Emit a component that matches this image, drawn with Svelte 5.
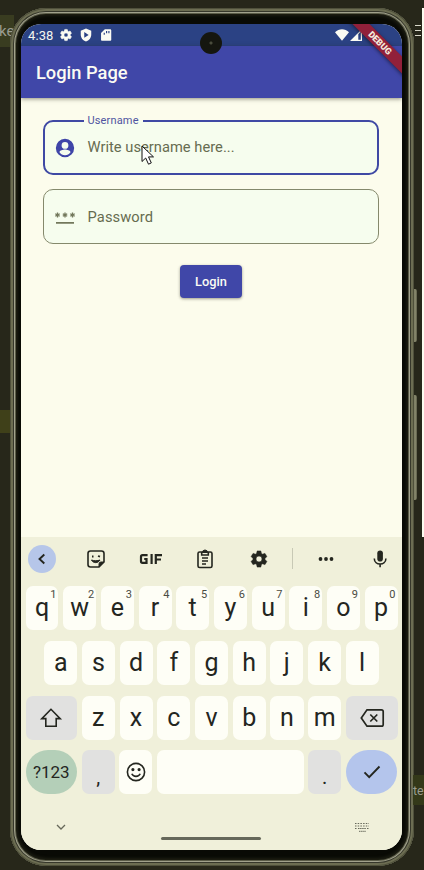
<script>
  const row1 = 'qwertyuiop'.split('');
  const row2 = 'asdfghjkl'.split('');
  const row3 = 'zxcvbnm'.split('');
  const gear =
    'M19.14 12.94c.04-.3.06-.61.06-.94s-.02-.64-.07-.94l2.03-1.58c.18-.14.23-.41.12-.61l-1.92-3.32c-.12-.22-.37-.29-.59-.22l-2.39.96c-.5-.38-1.03-.7-1.62-.94l-.36-2.54c-.04-.24-.24-.41-.48-.41h-3.84c-.24 0-.43.17-.47.41l-.36 2.54c-.59.24-1.13.57-1.62.94l-2.39-.96c-.22-.08-.47 0-.59.22L2.74 8.87c-.12.21-.08.47.12.61l2.03 1.58c-.05.3-.09.63-.09.94s.02.64.07.94l-2.03 1.58c-.18.14-.23.41-.12.61l1.92 3.32c.12.22.37.29.59.22l2.39-.96c.5.38 1.03.7 1.62.94l.36 2.54c.05.24.24.41.48.41h3.84c.24 0 .44-.17.47-.41l.36-2.54c.59-.24 1.13-.56 1.62-.94l2.39.96c.22.08.47 0 .59-.22l1.92-3.32c.12-.22.07-.47-.12-.61l-2.01-1.58zM12 15.6A3.6 3.6 0 1 1 12 8.4a3.6 3.6 0 0 1 0 7.2z';
</script>

<div class="desktop">
  <div class="band left"><span>ke</span></div>
  <div class="band right"><span>te</span></div>
  <div class="strip"></div>
  <div class="patch"></div>
  <div class="burger"><i></i><i></i><i></i></div>
  <div class="side power"></div>
  <div class="side volume"></div>

  <div class="phone">
    <div class="screen">
      <header class="status">
        <span class="clock">4:38</span>
        <svg class="s1" width="14" height="14" viewBox="0 0 24 24"><path fill-rule="evenodd" d={gear} stroke="#fbfbf3" stroke-width="1" /></svg>
        <svg class="s2" width="14" height="14" viewBox="0 0 24 24"><path fill-rule="evenodd" d="M12 1 3 4.5V11c0 5.6 3.8 10.7 9 12 5.200-1.300 9-6.400 9-12V4.500zM9 7l7.500 4.800L9 16.600z" /></svg>
        <svg class="s3" width="14" height="14" viewBox="0 0 24 24"><path fill-rule="evenodd" d="M19 2H10L3.500 8.500V20c0 1.100.9 2 2 2H19c1.100 0 2-.9 2-2V4c0-1.100-.9-2-2-2zM8 8h2v3.500H8zM12 5h2v4h-2zM16 5h2v4h-2z" /></svg>
        <svg class="wifi" width="14" height="12" viewBox="0 0 14 12"><path d="M0 3.200C4-.8 10-.8 14 3.200L7 11.800z" /></svg>
        <svg class="cell" width="12" height="12" viewBox="0 0 12 12"><path fill-rule="evenodd" d="M0 12 12 0V12zM8.300 5.300V10.800H10.800V2.800z" /></svg>
      </header>
      <div class="appbar">Login Page</div>

      <main>
        <div class="field active">
          <span class="label">Username</span>
          <svg width="22" height="22" viewBox="0 0 24 24" fill="#3f45a8"><path fill-rule="evenodd" d="M12 2a10 10 0 1 0 0 20 10 10 0 0 0 0-20zm0 3.500a3.700 3.700 0 1 1 0 7.400 3.700 3.700 0 0 1 0-7.400zM12 19.800c-2.500 0-4.700-1.300-6-3.300.03-2 4-3 6-3s5.970 1 6 3c-1.300 2-3.500 3.300-6 3.300z" /></svg>
          <span class="hint">Write username here...</span>
        </div>
        <div class="field">
          <svg width="22" height="22" viewBox="0 0 22 22" fill="none" stroke="#73785c">
            <path stroke-width="1.700" d="M2 16.800h18" />
            <path stroke-width="1.300" d="M3.500 6.500v5M1.300 7.700l4.400 2.600M5.700 7.700 1.300 10.300M11 6.500v5M8.800 7.700l4.400 2.600M13.200 7.700l-4.400 2.600M18.500 6.500v5M16.300 7.700l4.400 2.600M20.700 7.700l-4.400 2.600" />
          </svg>
          <span>Password</span>
        </div>
        <button class="login">Login</button>
      </main>

      <section class="keyboard">
        <div class="tools">
          <div class="tool back"><svg width="20" height="20" viewBox="0 0 20 20" class="line"><path stroke-width="1.900" d="m12.300 5.500-4.800 4.500 4.800 4.500" /></svg></div>
          <div class="tool">
            <svg width="20" height="20" viewBox="0 0 20 20" class="line">
              <path d="M13 18H4.500A2.500 2.500 0 0 1 2 15.500v-11A2.500 2.500 0 0 1 4.500 2h11A2.500 2.500 0 0 1 18 4.500V13z" />
              <path d="M13 18v-3a2 2 0 0 1 2-2h3z" fill="#24261f" stroke-width="1" />
              <path d="M5.500 11c1.700 3.500 6.500 3.500 8.500 0-2.500 1-6 1-8.500 0z" fill="#24261f" stroke-width="1" />
              <path d="M6 7.500h1.500M12 7l2 .7" stroke-width="1.800" />
            </svg>
          </div>
          <div class="tool">
            <svg width="24" height="14" viewBox="0 0 24 14" class="line gif"><path d="M8.600 3.200H3.500a1.500 1.500 0 0 0-1.500 1.500v4.600a1.500 1.500 0 0 0 1.500 1.500h4V7H5.200M12.600 2v10M16.800 12V3.200H23M16.800 7.500H22" /></svg>
          </div>
          <div class="tool">
            <svg width="20" height="20" viewBox="0 0 20 20" class="line">
              <rect x="3" y="3" width="14" height="15.500" rx="1.600" />
              <path d="M6.700 3v3h6.600V3M7 9h6M7 12h6M7 15h4" />
              <path d="M7.500 3.500a2.500 2.500 0 0 1 5 0z" fill="#24261f" stroke-width="1" />
            </svg>
          </div>
          <div class="tool"><svg width="20" height="20" viewBox="0 0 24 24" fill="#24261f" stroke="#24261f" stroke-width=".7"><path fill-rule="evenodd" d={gear} /></svg></div>
          <i class="divider"></i>
          <div class="tool"><svg width="18" height="6" viewBox="0 0 18 6" fill="#24261f"><circle cx="3.500" cy="3" r="1.900" /><circle cx="9" cy="3" r="1.900" /><circle cx="14.500" cy="3" r="1.900" /></svg></div>
          <div class="tool"><svg width="20" height="20" viewBox="0 0 20 20"><rect x="7.300" y="1.500" width="5.600" height="11" rx="2.800" fill="#24261f" /><path d="M4.300 9.500c0 7.300 11.600 7.300 11.600 0M10.100 15v3.200" fill="none" stroke="#24261f" stroke-width="1.600" /></svg></div>
        </div>

        <div class="row">
          {#each row1 as k, i}
            <div class="key">{k}<sup>{(i + 1) % 10}</sup></div>
          {/each}
        </div>
        <div class="row inset">
          {#each row2 as k}<div class="key">{k}</div>{/each}
        </div>
        <div class="row">
          <div class="key wide mod"><svg width="24" height="24" viewBox="0 0 24 24" class="line"><path stroke-width="1.600" d="M12 3.300 2.800 12.600h4v7.700h10.400v-7.700h4z" /></svg></div>
          {#each row3 as k}<div class="key">{k}</div>{/each}
          <div class="key wide mod"><svg width="26" height="22" viewBox="0 0 26 22" class="line"><path stroke-width="1.700" d="M8 2.800h14.500a1.700 1.700 0 0 1 1.700 1.700v13a1.700 1.700 0 0 1-1.700 1.700H8L2.300 11zM11.300 7.500l7 7M18.300 7.500l-7 7" /></svg></div>
        </div>
        <div class="row">
          <div class="key wide pill sym">?123</div>
          <div class="key mod low">,</div>
          <div class="key"><svg width="22" height="22" viewBox="0 0 22 22" class="line"><circle cx="11" cy="11" r="8.600" /><path d="M6.800 12.800c1.500 3.500 6.900 3.500 8.400 0" /><circle cx="7.900" cy="8.600" r=".8" fill="#24261f" /><circle cx="14.100" cy="8.600" r=".8" fill="#24261f" /></svg></div>
          <div class="key space"></div>
          <div class="key mod low">.</div>
          <div class="key wide pill ok"><svg width="22" height="22" viewBox="0 0 22 22" class="line"><path stroke-width="1.900" d="m3.500 11.300 4.700 4.900L18.500 5.500" /></svg></div>
        </div>

        <div class="nav">
          <svg width="12" height="10" viewBox="0 0 12 10" class="line thin"><path d="m2 3 4 4 4-4" /></svg>
          <i class="home"></i>
          <svg width="16" height="10" viewBox="0 0 16 10" stroke="#66685a" fill="none"><path stroke-width="1" stroke-dasharray="1.500 1.200" d="M1 1.500h14M1 4h14" /><path d="M1 6.500h2M4 6.500h8M13 6.500h2M5 9.300h7" stroke-dasharray="1.500 .6" /></svg>
        </div>
      </section>

      <div class="debug">DEBUG</div>
    </div>
    <div class="camera"></div>
  </div>

  <svg class="cursor" width="14" height="22" viewBox="0 0 14 22"><path d="M1 1v15.500l3.700-3.500 2.800 6.200 2.800-1.300-2.800-6h5z" fill="#fff" stroke="#111" stroke-width="1" /></svg>
</div>

<style>
  :global(body) { margin: 0; }
  .desktop {
    position: relative;
    width: 424px;
    height: 870px;
    overflow: hidden;
    background: #27271a;
    font-family: Roboto, sans-serif;
    color: #24261f;
  }
  .band { position: absolute; color: #9b9c90; font-size: 15px; line-height: 32px; }
  .left { left: 0; top: 15px; width: 14px; height: 32px; background: #393c20; }
  .left span { margin-left: -1px; }
  .right { left: 413px; top: 775px; width: 11px; height: 30px; background: #343919; font-size: 12.500px; z-index: 1; }
  .strip { position: absolute; right: 0; top: 8px; width: 2px; height: 529px; background: #fbfbef; }
  .patch { position: absolute; left: 0; top: 410px; width: 10px; height: 23px; background: #3f4019; }
  .burger { position: absolute; left: 415px; top: 25px; display: flex; flex-direction: column; gap: 4px; }
  .burger i { width: 6px; height: 1px; background: #d8d8c8; }
  .side { position: absolute; left: 411px; width: 6px; border-radius: 0 2px 2px 0; background: linear-gradient(90deg, #45462f, #8b8b70 70%, #5c5d48); }
  .power { top: 289px; height: 53px; }
  .volume { top: 395px; height: 105px; }

  .phone {
    position: relative;
    box-sizing: border-box;
    width: 404px;
    height: 858px;
    margin: 0 0 0 10px;
    top: 8px;
    padding: 16px 12px 16px 11px;
    border-radius: 36px;
    background: #090a05;
    box-shadow: inset 0 0 0 1px #4f503b, inset 0 0 0 3px #6c6d52, inset 0 0 0 4px #36372a, inset 0 0 0 5px #a1a18c, inset 0 0 0 6px #5b5c48, inset 0 0 3px 8px #1c1d12;
  }
  .screen {
    position: relative;
    height: 826px;
    border-radius: 20px;
    overflow: hidden;
    display: flex;
    flex-direction: column;
    background: #fcfcec;
  }
  .status { display: flex; align-items: center; height: 22px; flex: none; background: #2b4284; padding-left: 7px; color: #f4f5ee; fill: #fbfbf3; }
  .clock { font-size: 13px; width: 26px; letter-spacing: .1px; }
  .s1 { margin-left: 4.500px; }
  .s2 { margin-left: 6.500px; }
  .s3 { margin-left: 6px; }
  .wifi { margin-left: 222px; margin-top: -1px; }
  .cell { margin-left: 1px; margin-top: -1px; }
  .appbar {
    height: 51.500px;
    flex: none;
    box-sizing: border-box;
    padding-left: 15px;
    line-height: 54px;
    font-size: 18.300px;
    font-weight: 500;
    color: #fbfbf3;
    background: #4047a8;
    box-shadow: 0 1px 4px rgba(40, 40, 20, .5);
    z-index: 1;
  }
  main { flex: 1; display: flex; flex-direction: column; align-items: center; padding: 22.500px 1px 0 0; }
  .field {
    position: relative;
    box-sizing: border-box;
    width: 336px;
    height: 55px;
    margin-bottom: 14px;
    padding-left: 10px;
    border: 1px solid #85896c;
    border-radius: 10px;
    background: #f6fdee;
    display: flex;
    align-items: center;
    gap: 11.500px;
    font-size: 14.700px;
    letter-spacing: .1px;
    color: #666c50;
  }
  .field.active { border: 2px solid #3f49a4; padding-left: 9px; }
  .hint { letter-spacing: .02px; margin-top: -1px; }
  .label { position: absolute; left: 38.500px; top: -8px; padding: 0 4px; line-height: 14px; font-size: 11px; letter-spacing: .15px; color: #4e54a0; background: linear-gradient(#fcfcec 50%, #f6fdee 50%); }
  .login {
    width: 62px;
    height: 33px;
    margin: 7px 0 0;
    padding: 0;
    border: 0;
    border-radius: 4px;
    background: #4047a8;
    color: #fbfbf3;
    font: 500 12.800px Roboto, sans-serif;
    box-shadow: 0 1px 3px rgba(40, 40, 20, .45);
  }

  .keyboard { height: 313px; flex: none; box-sizing: border-box; padding: 0 4.500px; background: #f0f0da; display: flex; flex-direction: column; }
  .tools { display: flex; align-items: center; height: 43px; margin-bottom: 6px; padding-left: 2.500px; gap: 26.300px; }
  .tool { width: 28px; height: 28px; flex: none; display: flex; align-items: center; justify-content: center; }
  .back { border-radius: 50%; background: #b6c6e9; }
  .divider { width: 1px; height: 21px; flex: none; margin: 0 -8px 0 -7px; background: #c8c9b5; }
  .line { fill: none; stroke: #24261f; stroke-width: 1.600; }
  .gif { stroke-width: 2.200; }
  .thin { stroke: #66685a; stroke-width: 1.300; }
  .row { display: flex; gap: 4.700px; height: 44px; flex: none; margin-bottom: 10.800px; }
  .inset { padding: 0 18.800px; }
  .key {
    position: relative;
    flex: 1 1 0;
    min-width: 0;
    display: flex;
    align-items: center;
    justify-content: center;
    border-radius: 7px;
    background: #fefef6;
    font-size: 25px;
    line-height: 44px;
  }
  .key sup { position: absolute; right: 2px; top: 3px; font-size: 11px; line-height: 12px; color: #4a4c42; }
  .wide { flex: 0 0 51.600px; }
  .mod { background: #e1e1e0; }
  .pill { border-radius: 22px; }
  .sym { background: #b4cfb8; font-size: 17px; line-height: 46px; }
  .ok { background: #b4c5ec; }
  .space { flex: 0 0 146.500px; }
  .low { align-items: flex-end; line-height: 33px; font-size: 20px; }
  .nav { flex: 1; display: flex; justify-content: space-between; align-items: center; padding: 0 28px 0 29px; margin-top: 2px; }
  .nav svg { margin-bottom: 3px; }
  .home { width: 100px; height: 3px; border-radius: 2px; background: #66685a; margin: 19px 0 0 2px; }
  .debug {
    position: absolute;
    left: 299px;
    top: 13px;
    width: 120px;
    height: 12px;
    line-height: 12px;
    text-align: center;
    transform: rotate(45deg);
    background: #91203a;
    color: #f4e9dc;
    font-size: 9px;
    font-weight: 900;
    box-shadow: 0 1px 4px rgba(0, 0, 0, .5);
    z-index: 2;
  }
  .camera { position: absolute; z-index: 3; left: 190px; top: 24px; width: 22px; height: 22px; border-radius: 50%; background: radial-gradient(circle, #4a4c3c 0 1px, #15160f 2px 100%); }
  .cursor { position: absolute; left: 141px; top: 145px; }
</style>
